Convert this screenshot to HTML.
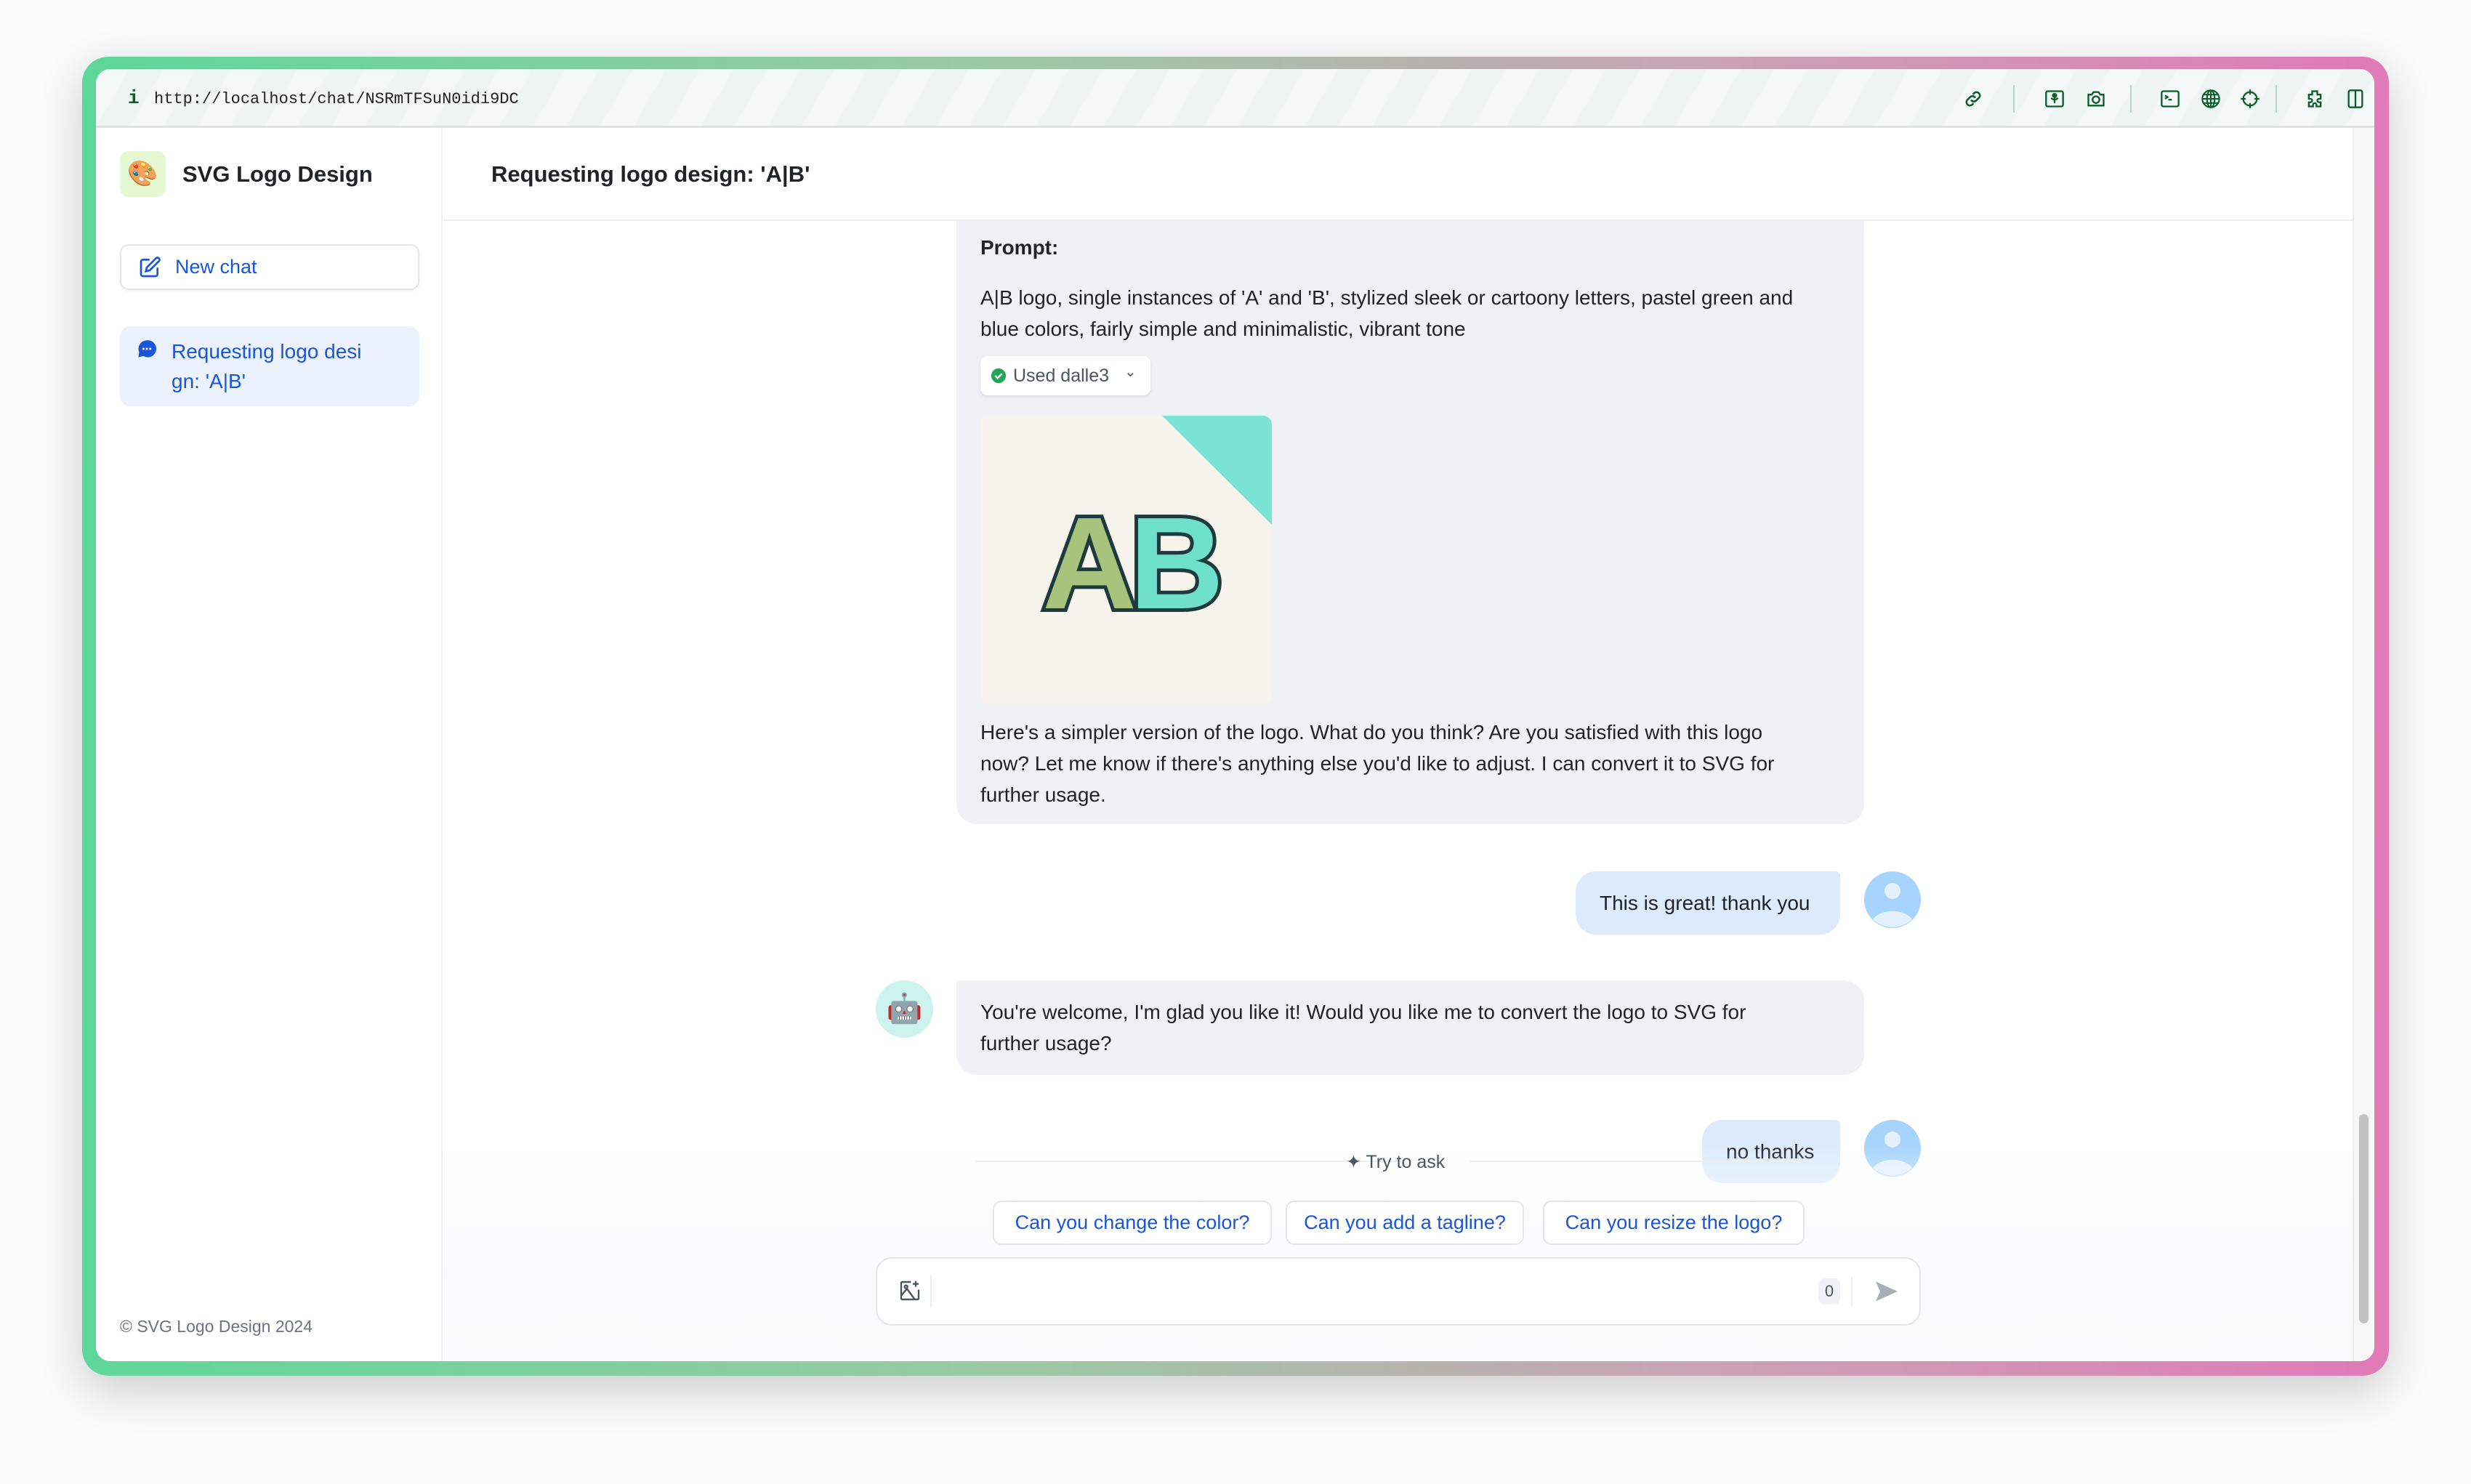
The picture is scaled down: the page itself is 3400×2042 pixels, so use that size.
<!DOCTYPE html>
<html><head><meta charset="utf-8"><style>
*{box-sizing:border-box;margin:0;padding:0}
body{width:3400px;height:2042px;background:#fafafa;font-family:"Liberation Sans",sans-serif;position:relative;overflow:hidden;color:#1f2328}
.a{position:absolute}
.frame{left:113px;top:78px;width:3174px;height:1815px;border-radius:36px;background:linear-gradient(90deg,#5ed79a 0%,#9bc9a4 40%,#c9a4b4 70%,#e07ab8 100%);box-shadow:0 20px 60px rgba(0,0,0,.18)}
.win{left:132px;top:95px;width:3135px;height:1778px;border-radius:20px;background:#fff;overflow:hidden}
.tb{left:0;top:0;width:3135px;height:81px;background:repeating-linear-gradient(120deg,#f3f8f6 0 40px,#eef5f2 40px 80px);border-bottom:3px solid #dde3e1}
.mono{font-family:"Liberation Mono",monospace}
.ic{position:absolute;top:27px;width:28px;height:28px}
.sep{position:absolute;top:22px;width:2px;height:38px;background:#b8d6c8}
.t{white-space:nowrap;position:absolute}
.blue{color:#1a56db}
.msg{font-size:28px;line-height:43px;color:#1f2328}
.sug{position:absolute;top:1557px;height:61px;border:2px solid #e3e6ea;border-radius:12px;background:#fff;color:#1a56db;font-size:27px;line-height:57px;text-align:center}
</style></head><body>
<div class="a frame"></div>
<div class="a win">
  <div class="a tb">
    <div class="t mono" style="left:44px;top:25px;font-size:26px;font-weight:bold;color:#0b5e2b">i</div>
    <div class="t mono" style="left:80px;top:29px;font-size:22px;color:#222">http://localhost/chat/NSRmTFSuN0idi9DC</div>
    <svg class="ic" style="left:2569px" viewBox="0 0 24 24" fill="none" stroke="#0b5e2b" stroke-width="2.2" stroke-linecap="round"><path d="M10 14a4 4 0 0 0 5.6 0l3.5-3.5a4 4 0 0 0-5.6-5.6l-1.2 1.2M14 10a4 4 0 0 0-5.6 0L4.9 13.5a4 4 0 0 0 5.6 5.6l1.2-1.2"/></svg>
    <div class="sep" style="left:2638px"></div>
    <svg class="ic" style="left:2681px" viewBox="0 0 24 24" fill="none" stroke="#0b5e2b" stroke-width="2"><rect x="2" y="3" width="20" height="18" rx="2"/><path d="M12 9v8M8 11q4 4 8 0" /><circle cx="12" cy="8" r="2" fill="#0b5e2b"/></svg>
    <svg class="ic" style="left:2738px" viewBox="0 0 24 24" fill="none" stroke="#0b5e2b" stroke-width="2"><path d="M3 7h4l2-3h6l2 3h4v13H3z"/><circle cx="12" cy="13" r="4"/></svg>
    <div class="sep" style="left:2799px"></div>
    <svg class="ic" style="left:2840px" viewBox="0 0 24 24" fill="none" stroke="#0b5e2b" stroke-width="2"><rect x="2" y="3" width="20" height="18" rx="2"/><path d="M6 8l3 2-3 2M10 13h4"/></svg>
    <svg class="ic" style="left:2896px" viewBox="0 0 24 24" fill="none" stroke="#0b5e2b" stroke-width="1.8"><circle cx="12" cy="12" r="10"/><ellipse cx="12" cy="12" rx="4.5" ry="10"/><path d="M2 12h20M4 7h16M4 17h16M12 2v20"/></svg>
    <svg class="ic" style="left:2950px" viewBox="0 0 24 24" fill="none" stroke="#0b5e2b" stroke-width="2"><circle cx="12" cy="12" r="8"/><path d="M12 1v6M12 17v6M1 12h6M17 12h6"/></svg>
    <div class="sep" style="left:2999px"></div>
    <svg class="ic" style="left:3039px" viewBox="0 0 24 24" fill="none" stroke="#0b5e2b" stroke-width="2"><path d="M9 3h6v4a2 2 0 1 0 0 0h4v5h-2a2 2 0 1 0 0 4h2v5h-5v-2a2 2 0 1 0-4 0v2H5v-5h2a2 2 0 1 0 0-4H5V7h4z"/></svg>
    <svg class="ic" style="left:3095px" viewBox="0 0 24 24" fill="none" stroke="#0b5e2b" stroke-width="2"><rect x="4" y="2" width="16" height="20" rx="2"/><path d="M12 2v20"/></svg>
  </div>
  <div class="a" style="left:0;top:81px;width:477px;height:1697px;border-right:2px solid #eceef1;background:#fff"></div>
  <div class="a" style="left:33px;top:113px;width:63px;height:63px;border-radius:12px;background:#e5f8d2;font-size:34px;line-height:63px;text-align:center">🎨</div>
  <div class="t" style="left:119px;top:127px;font-size:31px;font-weight:bold;color:#1f2328">SVG Logo Design</div>
  <div class="a" style="left:33px;top:241px;width:412px;height:63px;border:2px solid #e3e5e8;border-radius:12px;box-shadow:0 2px 4px rgba(0,0,0,.05)"></div>
  <svg class="a" style="left:58px;top:257px;width:32px;height:32px" viewBox="0 0 24 24" fill="none" stroke="#1a56db" stroke-width="2" stroke-linecap="round"><path d="M11 4H5a2 2 0 0 0-2 2v13a2 2 0 0 0 2 2h13a2 2 0 0 0 2-2v-6"/><path d="M18.5 2.5a2.1 2.1 0 0 1 3 3L12 15l-4 1 1-4z"/></svg>
  <div class="t blue" style="left:109px;top:257px;font-size:27px">New chat</div>
  <div class="a" style="left:33px;top:354px;width:412px;height:110px;border-radius:14px;background:#ebf1fd"></div>
  <svg class="a" style="left:56px;top:371px;width:28px;height:28px" viewBox="0 0 24 24"><path d="M12 2a10 10 0 0 0-9 14l-1 6 6-1.5A10 10 0 1 0 12 2z" fill="#1a56db"/><circle cx="8" cy="12" r="1.3" fill="#fff"/><circle cx="12" cy="12" r="1.3" fill="#fff"/><circle cx="16" cy="12" r="1.3" fill="#fff"/></svg>
  <div class="a blue" style="left:104px;top:368px;font-size:28px;line-height:41px;width:330px">Requesting logo desi<br>gn: 'A|B'</div>
  <div class="t" style="left:33px;top:1717px;font-size:23px;color:#6b7280">© SVG Logo Design 2024</div>
  <div class="a" style="left:479px;top:81px;width:2626px;height:128px;border-bottom:2px solid #eceef1;background:#fff;z-index:3"></div>
  <div class="t" style="left:544px;top:127px;font-size:31px;font-weight:bold;z-index:4">Requesting logo design: 'A|B'</div>
  <div class="a" style="left:3105px;top:81px;width:30px;height:1697px;background:#f6f6f6;border-left:2px solid #ebebeb"></div>
  <div class="a" style="left:3114px;top:1438px;width:13px;height:288px;border-radius:7px;background:#c2c2c2"></div>
  <div class="a" style="left:1184px;top:160px;width:1249px;height:879px;border-radius:0 0 28px 28px;background:#f0f1f5"></div>
  <div class="t msg" style="left:1217px;top:224px;font-weight:bold">Prompt:</div>
  <div class="a msg" style="left:1217px;top:293px;width:1132px">A|B logo, single instances of 'A' and 'B', stylized sleek or cartoony letters, pastel green and blue colors, fairly simple and minimalistic, vibrant tone</div>
  <div class="a" style="left:1217px;top:395px;width:234px;height:54px;border-radius:10px;background:#fff;box-shadow:0 2px 5px rgba(0,0,0,.1)"></div>
  <svg class="a" style="left:1231px;top:411px;width:22px;height:22px" viewBox="0 0 24 24"><circle cx="12" cy="12" r="11" fill="#22a55b"/><path d="M7 12l3.5 3.5L17 9" stroke="#fff" stroke-width="2.6" fill="none"/></svg>
  <div class="t" style="left:1262px;top:408px;font-size:25px;color:#4b5563">Used dalle3</div>
  <div class="t" style="left:1415px;top:404px;font-size:20px;color:#4b5563">⌄</div>
  <div class="a" style="left:1217px;top:477px;width:401px;height:397px;border-radius:12px;background:#f5f3ec;overflow:hidden">
    <svg width="401" height="397" viewBox="0 0 401 397"><polygon points="250,0 401,0 401,150" fill="#7ae3d4"/>
      <g font-family="Liberation Sans,sans-serif" font-weight="bold" font-size="180" stroke="#1d3a3e" stroke-width="10" paint-order="stroke">
      <text x="85" y="265" fill="#a8c47c">A</text><text x="205" y="265" fill="#6fe0cc">B</text></g></svg>
  </div>
  <div class="a msg" style="left:1217px;top:891px;width:1132px">Here's a simpler version of the logo. What do you think? Are you satisfied with this logo now? Let me know if there's anything else you'd like to adjust. I can convert it to SVG for further usage.</div>
  <div class="a" style="left:2036px;top:1104px;width:364px;height:87px;border-radius:28px 6px 28px 28px;background:#dcebfc"></div>
  <div class="t msg" style="left:2069px;top:1126px">This is great! thank you</div>
  <svg class="a" style="left:2433px;top:1104px;width:78px;height:78px" viewBox="0 0 78 78"><circle cx="39" cy="39" r="39" fill="#a7d4fc"/><circle cx="39" cy="27" r="11" fill="#e3f1fe"/><path d="M12 66a30 20 0 0 1 54 0a39 39 0 0 1-54 0z" fill="#e3f1fe"/></svg>
  <div class="a" style="left:1073px;top:1254px;width:79px;height:79px;border-radius:50%;background:#cdf3ef;font-size:40px;line-height:79px;text-align:center">🤖</div>
  <div class="a" style="left:1184px;top:1254px;width:1249px;height:130px;border-radius:6px 28px 28px 28px;background:#f0f1f5"></div>
  <div class="a msg" style="left:1217px;top:1276px;width:1120px">You're welcome, I'm glad you like it! Would you like me to convert the logo to SVG for further usage?</div>
  <div class="a" style="left:2210px;top:1446px;width:190px;height:87px;border-radius:28px 6px 28px 28px;background:#dcebfc"></div>
  <div class="t msg" style="left:2243px;top:1468px">no thanks</div>
  <svg class="a" style="left:2433px;top:1446px;width:78px;height:78px" viewBox="0 0 78 78"><circle cx="39" cy="39" r="39" fill="#a7d4fc"/><circle cx="39" cy="27" r="11" fill="#e3f1fe"/><path d="M12 66a30 20 0 0 1 54 0a39 39 0 0 1-54 0z" fill="#e3f1fe"/></svg>
  <div class="a" style="left:479px;top:1480px;width:2626px;height:298px;background:linear-gradient(rgba(255,255,255,0),rgba(250,251,252,.95) 40%,#f8f9fa)"></div>
  <div class="a" style="left:1210px;top:1502px;width:580px;height:2px;background:#eceef0"></div>
  <div class="a" style="left:1890px;top:1502px;width:460px;height:2px;background:#eceef0"></div>
  <div class="t" style="left:1720px;top:1489px;font-size:25px;color:#4b5563">✦ Try to ask</div>
  <div class="sug" style="left:1234px;width:384px">Can you change the color?</div>
  <div class="sug" style="left:1637px;width:328px">Can you add a tagline?</div>
  <div class="sug" style="left:1991px;width:360px">Can you resize the logo?</div>
  <div class="a" style="left:1073px;top:1635px;width:1438px;height:94px;border:2px solid #e3e5e8;border-radius:22px;background:#fff"></div>
  <svg class="a" style="left:1104px;top:1665px;width:32px;height:32px" viewBox="0 0 24 24" fill="none" stroke="#4b5563" stroke-width="1.8"><path d="M13 3H4a1 1 0 0 0-1 1v16a1 1 0 0 0 1 1h16a1 1 0 0 0 1-1v-9M18 2v6M15 5h6M3 17l6-7 8 11"/><circle cx="8" cy="8" r="1.5"/></svg>
  <div class="a" style="left:1148px;top:1660px;width:2px;height:44px;background:#eceef0"></div>
  <div class="a" style="left:2370px;top:1664px;width:30px;height:36px;border-radius:8px;background:#f0f1f4;font-size:22px;line-height:36px;text-align:center;color:#4b5563">0</div>
  <div class="a" style="left:2415px;top:1662px;width:2px;height:40px;background:#eceef0"></div>
  <svg class="a" style="left:2445px;top:1664px;width:38px;height:36px" viewBox="0 0 24 24"><path d="M2 3l20 9-20 9 4-9z" fill="#a9adb5"/></svg>
</div>
</body></html>
